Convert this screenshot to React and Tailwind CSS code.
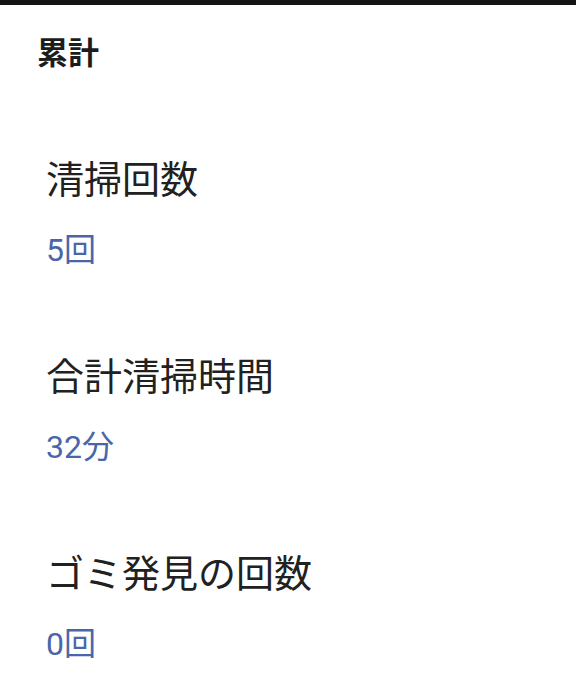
import React from 'react';

const stats = [
  { title: '清掃回数', value: '5回' },
  { title: '合計清掃時間', value: '32分' },
  { title: 'ゴミ発見の回数', value: '0回' },
];

export default function App() {
  return (
    <div className="w-[576px] h-[691px] bg-white overflow-hidden font-['Roboto','Noto_Sans_CJK_JP',sans-serif]">
      <div className="h-[5px] bg-[#141414]" />
      <div className="pl-[37px] pt-[29px] text-[31px] leading-[40px] font-bold text-[#1c1c1c]">累計</div>
      <div className="mt-[42px]">
        {stats.map((s) => (
          <div key={s.title} className="pl-[46px] pt-[40px] pb-[41px]">
            <div className="text-[38px] leading-[48px] text-[#212121]">{s.title}</div>
            <div className="mt-[24px] text-[32px] leading-[44px] text-[#4a66a8]">{s.value}</div>
          </div>
        ))}
      </div>
    </div>
  );
}
